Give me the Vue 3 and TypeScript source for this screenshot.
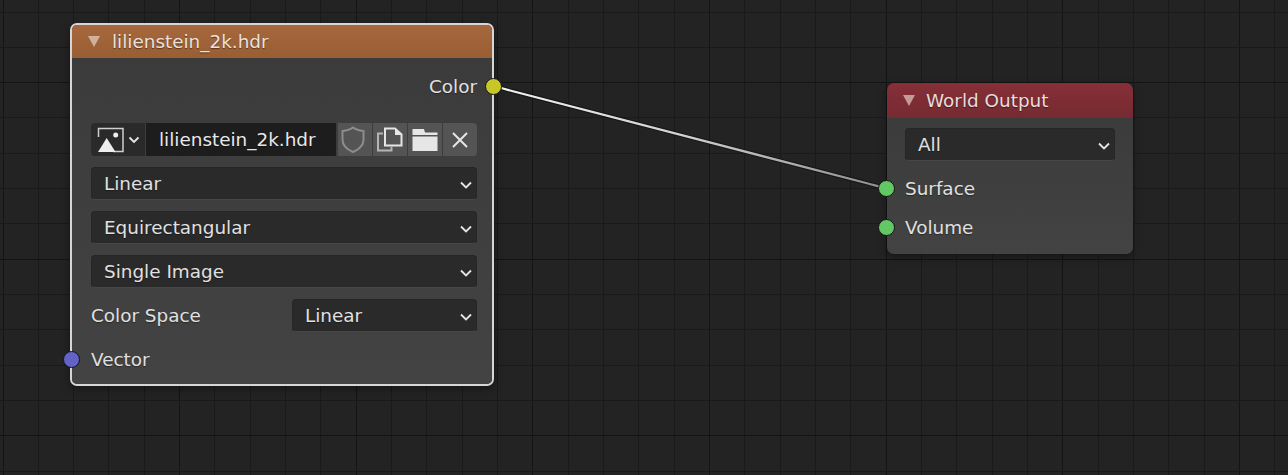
<script setup lang="ts">
const W = 1288;
const H = 475;
const step = 35.33;

// grid lines, every fifth one is darker
const makeLines = (start: number, max: number, major: number) => {
  const lines: { at: number; major: boolean }[] = [];
  for (let k = 0; start + k * step < max; k++) {
    lines.push({ at: Math.floor(start + k * step) + 0.5, major: (k - major) % 5 === 0 });
  }
  return lines;
};

const vLines = makeLines(3, W, 0);
const hLines = makeLines(12, H, 2);

const wire = 'M494 86 C 500 87.5, 506 89.5, 512 91 L 868 183.5 C 874 185, 880 187, 886 188';
</script>

<template>
  <div class="editor">
    <svg class="grid" :width="W" :height="H" :viewBox="`0 0 ${W} ${H}`">
      <line v-for="l in vLines" :key="'v' + l.at" :x1="l.at" :x2="l.at" y1="0" :y2="H" :class="l.major ? 'major' : 'minor'" />
      <line v-for="l in hLines" :key="'h' + l.at" :y1="l.at" :y2="l.at" x1="0" :x2="W" :class="l.major ? 'major' : 'minor'" />
    </svg>

    <svg class="wires" :width="W" :height="H" :viewBox="`0 0 ${W} ${H}`">
      <defs>
        <linearGradient id="wire-fade" gradientUnits="userSpaceOnUse" x1="494" y1="86" x2="886" y2="188">
          <stop offset="0" stop-color="#f4f4f4" />
          <stop offset="0.5" stop-color="#cfcfcf" />
          <stop offset="1" stop-color="#8c8c8c" />
        </linearGradient>
      </defs>
      <path :d="wire" fill="none" stroke="#141414" stroke-width="4.5" stroke-opacity="0.85" />
      <path :d="wire" fill="none" stroke="url(#wire-fade)" stroke-width="2.3" />
    </svg>

    <div class="node env">
      <div class="node-header env-header">
        <span class="collapse"></span>
        <span>lilienstein_2k.hdr</span>
      </div>
      <div class="node-body env-body">
        <div class="row output">
          <span>Color</span>
          <i class="socket yellow"></i>
        </div>
        <div class="image-row">
          <div class="image-pick">
            <svg width="54" height="33" viewBox="0 0 54 33">
              <path d="M7.500 14V5.500H32V28.500H22" class="stroke-icon" />
              <path d="M7 29L15.700 15L24.500 29Z" fill="#eee" />
              <circle cx="24.700" cy="12" r="2.500" fill="#eee" />
              <path d="M38.500 14.500L43 19L47.500 14.500" class="stroke-light" />
            </svg>
          </div>
          <div class="image-name">lilienstein_2k.hdr</div>
          <div class="image-btn">
            <svg width="34" height="33" viewBox="0 0 34 33">
              <path d="M15 4.500C18 7 21.500 7.500 25.500 8V16.500C25.500 22 21 26.500 15 29C9 26.500 4.500 22 4.500 16.500V8C8.500 7.500 12 7 15 4.500Z" fill="none" stroke="#8d8d8d" stroke-width="2" />
            </svg>
          </div>
          <div class="image-btn">
            <svg width="34" height="33" viewBox="0 0 34 33">
              <path d="M10 10.500H5V27.500H18.500V24" fill="none" stroke="#b4b4b4" stroke-width="2" />
              <path d="M12 5.500H22L28.500 11.500V22.500H12Z" fill="none" stroke="#e6e6e6" stroke-width="2" />
              <path d="M22 5L29 12H22Z" fill="#e6e6e6" />
            </svg>
          </div>
          <div class="image-btn">
            <svg width="34" height="33" viewBox="0 0 34 33">
              <path d="M4.500 6H16L17 9.500H29.500V12H4.500Z M4.500 13.500H29.500V28H4.500Z" fill="#e6e6e6" />
            </svg>
          </div>
          <div class="image-btn last">
            <svg width="34" height="33" viewBox="0 0 34 33">
              <path d="M10 10L24 24M24 10L10 24" fill="none" stroke="#e6e6e6" stroke-width="2" />
            </svg>
          </div>
        </div>
        <div class="select"><span>Linear</span><svg class="chev" width="12" height="8" viewBox="0 0 12 8"><path d="M1 1.500L6 6.500L11 1.500" /></svg></div>
        <div class="select"><span>Equirectangular</span><svg class="chev" width="12" height="8" viewBox="0 0 12 8"><path d="M1 1.500L6 6.500L11 1.500" /></svg></div>
        <div class="select"><span>Single Image</span><svg class="chev" width="12" height="8" viewBox="0 0 12 8"><path d="M1 1.500L6 6.500L11 1.500" /></svg></div>
        <div class="row space">
          <span>Color Space</span>
          <div class="select short"><span>Linear</span><svg class="chev" width="12" height="8" viewBox="0 0 12 8"><path d="M1 1.500L6 6.500L11 1.500" /></svg></div>
        </div>
        <div class="row">
          <i class="socket blue"></i>
          <span>Vector</span>
        </div>
      </div>
    </div>

    <div class="node world">
      <div class="node-header world-header">
        <span class="collapse"></span>
        <span>World Output</span>
      </div>
      <div class="node-body world-body">
        <div class="select"><span>All</span><svg class="chev" width="12" height="8" viewBox="0 0 12 8"><path d="M1 1.500L6 6.500L11 1.500" /></svg></div>
        <div class="row input-row first">
          <i class="socket green"></i>
          <span>Surface</span>
        </div>
        <div class="row input-row">
          <i class="socket green"></i>
          <span>Volume</span>
        </div>
      </div>
    </div>
  </div>
</template>

<style scoped>
.editor {
  position: relative;
  width: 1288px;
  height: 475px;
  overflow: hidden;
  background: #232323;
  font-family: "DejaVu Sans", sans-serif;
  font-size: 18.4px;
  color: #e0e0e0;
}

.grid,
.wires {
  position: absolute;
  left: 0;
  top: 0;
}

.minor {
  stroke: #1a1a1a;
  stroke-width: 1;
}

.major {
  stroke: #141414;
  stroke-width: 1;
}

.node {
  position: absolute;
  box-sizing: border-box;
  border-radius: 7px;
  box-shadow: 0 3px 9px rgba(0, 0, 0, 0.4);
}

.env {
  left: 70px;
  top: 23px;
  width: 424px;
  height: 363px;
  border: 2px solid #d8d6d4;
}

.world {
  left: 887px;
  top: 83px;
  width: 246px;
  height: 171px;
}

.node-header {
  display: flex;
  align-items: center;
  height: 33px;
  border-radius: 5px 5px 0 0;
  text-shadow: 0 1px 1px rgba(0, 0, 0, 0.45);
}

.env-header {
  background: linear-gradient(#a6673c, #9a5e34);
  color: #eae2dc;
  padding-left: 16px;
  gap: 12px;
}

.world-header {
  height: 35px;
  border-radius: 7px 7px 0 0;
  background: linear-gradient(#862f37, #762a32);
  color: #e8dcdd;
  padding-left: 16px;
  gap: 11px;
  box-shadow: 0 1px 0 #343434;
}

.collapse {
  width: 0;
  height: 0;
  border-left: 6px solid transparent;
  border-right: 6px solid transparent;
  border-top: 11px solid rgba(240, 230, 222, 0.6);
}

.node-body {
  position: relative;
  display: flex;
  flex-direction: column;
  box-sizing: border-box;
  background: linear-gradient(rgba(60, 60, 60, 0.97), rgba(68, 68, 68, 0.97));
  text-shadow: 0 1px 1px rgba(0, 0, 0, 0.4);
}

.env-body {
  height: 326px;
  padding: 12px 15px 0 19px;
  gap: 11px;
  border-radius: 0 0 5px 5px;
}

.world-body {
  height: 136px;
  padding: 10px 18px 0 18px;
  border-radius: 0 0 7px 7px;
}

.row {
  position: relative;
  display: flex;
  align-items: center;
  height: 33px;
  flex-shrink: 0;
}

.output {
  justify-content: flex-end;
  margin-bottom: 9px;
}

.space {
  justify-content: space-between;
}

.input-row {
  margin-top: 6px;
}

.input-row.first {
  margin-top: 11px;
}

.socket {
  position: absolute;
  box-sizing: border-box;
  width: 17px;
  height: 17px;
  top: 8px;
  border-radius: 50%;
  border: 1px solid #141414;
}

.yellow {
  background: #c7c729;
  right: -25px;
}

.blue {
  background: #6363c7;
  left: -28px;
}

.green {
  background: #63c763;
  left: -27px;
}

.select {
  display: flex;
  align-items: center;
  justify-content: space-between;
  flex-shrink: 0;
  box-sizing: border-box;
  height: 33px;
  padding: 0 4px 0 12px;
  background: #2a2a2a;
  border: 1px solid #262626;
  border-bottom-color: #474747;
  border-radius: 4px;
}

.short {
  width: 185px;
}

.chev {
  margin-top: 3px;
  fill: none;
  stroke: #e6e6e6;
  stroke-width: 1.800;
}

.image-row {
  display: flex;
  flex-shrink: 0;
  height: 33px;
  gap: 1px;
}

.image-pick {
  width: 54px;
  height: 33px;
  background: #2a2a2a;
  border-radius: 4px 0 0 4px;
}

.image-name {
  box-sizing: border-box;
  width: 190px;
  height: 33px;
  padding-left: 13px;
  line-height: 33px;
  background: #1d1d1d;
  color: #e8e8e8;
}

.image-btn {
  width: 34px;
  height: 33px;
  background: #545454;
}

.image-name + .image-btn {
  margin-left: 1px;
}

.last {
  border-radius: 0 4px 4px 0;
}

.image-pick svg,
.image-btn svg {
  display: block;
}

.stroke-light {
  fill: none;
  stroke: #e6e6e6;
  stroke-width: 1.800;
}

.stroke-icon {
  fill: none;
  stroke: #cfcfcf;
  stroke-width: 1.500;
}
</style>
